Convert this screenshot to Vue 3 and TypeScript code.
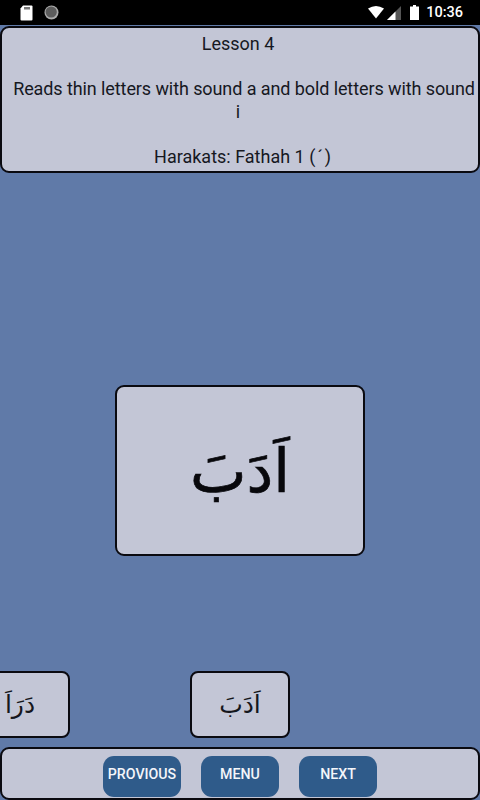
<script setup lang="ts">
const thumbs: string[] = ['دَرَاَ', 'اَدَبَ']
</script>

<template>
  <div class="screen">
    <header class="status">
      <div class="status-left">
        <svg class="sd" width="13" height="16" viewBox="0 0 13 16"><path fill="#fff" d="M3 0.5h8.500a1 1 0 0 1 1 1v13a1 1 0 0 1-1 1h-10a1 1 0 0 1-1-1V3.500z" /><rect x="4" y="2" width="6" height="2.500" fill="#777" /></svg>
        <svg width="15" height="15" viewBox="0 0 15 15"><circle cx="7.500" cy="7.500" r="7" fill="#aaa" /><circle cx="7.200" cy="7" r="5.600" fill="#5c5c5c" /></svg>
      </div>
      <div class="status-right">
        <svg width="16" height="13" viewBox="0 0 16 13"><path fill="#fff" d="M0 2.500Q8-2.500 16 2.500L8 12.500z" /></svg>
        <svg class="signal" width="14" height="14" viewBox="0 0 14 14"><path fill="#555" d="M14 0v14H0z" /><path fill="#fff" d="M8.500 5.500V14H0z" /></svg>
        <svg class="battery" width="9" height="15" viewBox="0 0 9 15"><path fill="#fff" d="M3 0h3v1.500h3V15H0V1.500h3z" /></svg>
        <span class="time">10:36</span>
      </div>
    </header>

    <main class="content">
      <section class="lesson">
        <p>Lesson 4</p>
        <p>&nbsp;</p>
        <p class="rule-first">Reads thin letters with sound a and bold letters with sound</p>
        <p>i</p>
        <p>&nbsp;</p>
        <p class="harakats">Harakats: Fathah 1 (&#8202;´&#8202;)</p>
      </section>

      <div class="stage">
        <div class="word-card" lang="ar" dir="rtl">اَدَبَ</div>
      </div>

      <div class="thumbs">
        <div v-for="t in thumbs" :key="t" class="thumb" lang="ar" dir="rtl">{{ t }}</div>
      </div>

      <nav class="actions">
        <button class="btn">PROVIOUS</button>
        <button class="btn">MENU</button>
        <button class="btn">NEXT</button>
      </nav>
    </main>
  </div>
</template>

<style scoped>
.screen {
  width: 480px;
  height: 800px;
  display: flex;
  flex-direction: column;
  overflow: hidden;
  background: #000;
  font-family: Roboto, "DejaVu Sans", sans-serif;
}
.status {
  height: 25px;
  flex: none;
  display: flex;
  justify-content: space-between;
  align-items: center;
  padding: 0 17px 0 20px;
  background: #000;
}
.status-left {
  display: flex;
  align-items: center;
  gap: 11px;
}
.status-right {
  display: flex;
  align-items: center;
}
.signal {
  margin-left: 3px;
}
.battery {
  margin-left: 9px;
}
.time {
  margin-left: 7px;
  color: #fff;
  font-size: 14.500px;
  font-weight: 500;
}
.content {
  flex: 1;
  min-height: 0;
  display: flex;
  flex-direction: column;
  background: #607aa8;
}
.lesson {
  height: 147px;
  flex: none;
  box-sizing: border-box;
  margin-top: 1px;
  padding: 5px 4px 0 0;
  border: 2px solid #0a0a10;
  border-radius: 9px;
  background: #c3c6d6;
  color: #16181f;
  font-size: 18px;
  line-height: 22.500px;
  text-align: center;
}
.lesson p {
  margin: 0;
}
.lesson .rule-first {
  margin: 0 -1px 0 11px;
  white-space: nowrap;
  letter-spacing: -0.090px;
}
.lesson .harakats {
  margin-left: 9px;
}
.stage {
  flex: 1;
  display: flex;
  align-items: flex-end;
  justify-content: center;
  padding-bottom: 115px;
}
.word-card {
  width: 250px;
  height: 171px;
  box-sizing: border-box;
  display: flex;
  align-items: center;
  justify-content: center;
  border: 2px solid #0a0a10;
  border-radius: 9px;
  background: #c3c6d6;
  color: #08080c;
  font-family: "DejaVu Sans", sans-serif;
  font-size: 60px;
  -webkit-text-stroke: 0.700px #08080c;
}
.thumbs {
  display: flex;
  gap: 120px;
  margin-left: -30px;
  margin-bottom: 9px;
}
.thumb {
  width: 100px;
  height: 67px;
  box-sizing: border-box;
  display: flex;
  align-items: center;
  justify-content: center;
  border: 2px solid #0a0a10;
  border-radius: 8px;
  background: #c3c6d6;
  color: #15161c;
  font-family: "DejaVu Sans", sans-serif;
  font-size: 25px;
}
.actions {
  height: 53px;
  flex: none;
  box-sizing: border-box;
  display: flex;
  justify-content: center;
  gap: 20px;
  padding-top: 7px;
  border: 2px solid #0a0a10;
  border-radius: 9px;
  background: #c3c6d6;
}
.btn {
  width: 78px;
  height: 41px;
  padding: 0 0 5px;
  border: 0;
  border-radius: 11px;
  background: #2f5b8a;
  color: #f4f6fa;
  font-family: Roboto, sans-serif;
  font-size: 14.200px;
  font-weight: 500;
}
</style>
